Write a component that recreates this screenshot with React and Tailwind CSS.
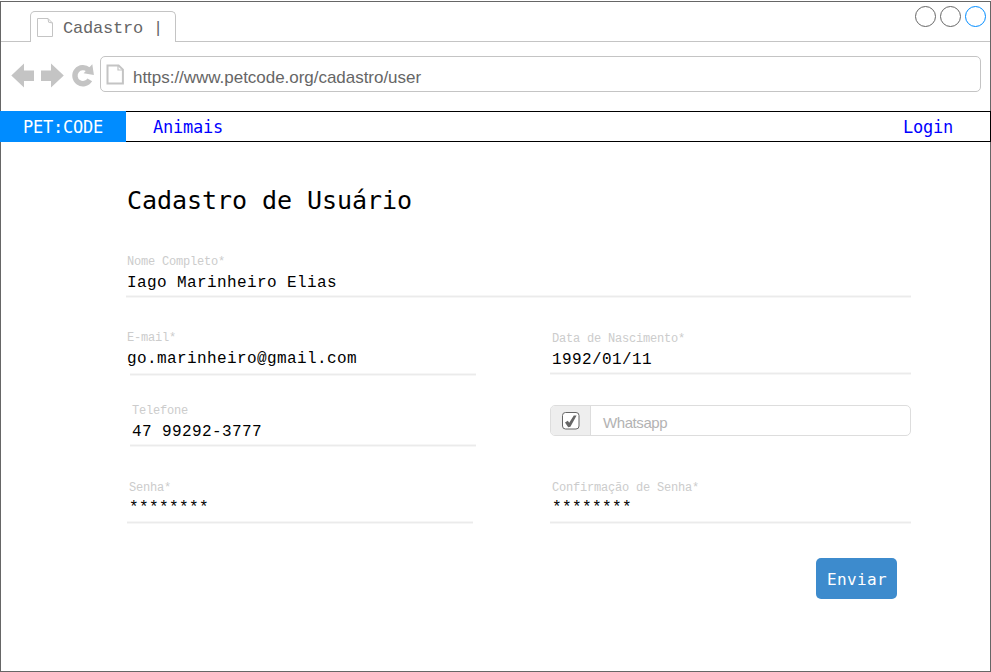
import React from "react";

function PageIcon({ size, stroke, className }) {
  return size === "sm" ? (
    <svg className={className} width="18" height="20" viewBox="0 0 18 20" fill="none" stroke="#c4c4c4" strokeWidth={stroke}>
      <path d="M1.5 1.5H12L16.5 6V19.5H1.5Z" />
      <path d="M12 1.5L12.6 5.2L16.5 6" />
    </svg>
  ) : (
    <svg className={className} width="19" height="22" viewBox="0 0 19 22" fill="none" stroke="#c4c4c4" strokeWidth={stroke}>
      <path d="M1.5 1.5H12.6L16.9 5.6V19.5H1.5Z" />
      <path d="M12 1.5V6H16.9" strokeWidth="1.2" />
    </svg>
  );
}

function NavIcons() {
  return (
    <svg className="block shrink-0" width="99" height="30" viewBox="1 60 99 30">
      <path d="M11.3 75.5L24 63.5V70.5H34V81H24V87.5Z" fill="#c4c4c4" />
      <path d="M63.8 75.5L51 63.5V70.5H41V81H51V87.5Z" fill="#c4c4c4" />
      <path d="M89.8 79.8A8 8 0 1 1 88.4 69.8" fill="none" stroke="#c4c4c4" strokeWidth="5.4" />
      <path d="M92.3 64.3L93.9 74.9L83.6 73.2Z" fill="#c4c4c4" />
    </svg>
  );
}

function Field({ label, value, box, text, valueBox, line }) {
  return (
    <div className={`flex flex-col ${box}`}>
      <div className={`mt-px h-[14px] text-[12px] leading-[14px] tracking-[-0.2px] text-[#cccccc] ${text}`}>{label}</div>
      <div className={`mt-[4px] h-[19px] text-[16px] tracking-[0.4px] text-black ${text} ${valueBox || "leading-[20px]"}`}>{value}</div>
      <div className={`h-[3px] border-y border-[#f6f6f6] bg-[#ebebeb] ${line}`} />
    </div>
  );
}

export default function App() {
  return (
    <div className="h-[672px] w-[991px] overflow-hidden bg-white pt-px font-['Liberation_Mono',monospace]">
      <div className="flex h-[671px] flex-col border border-[#666666]">
        <div className="flex h-[40px] shrink-0">
          <div className="w-[29px] border-b border-[#c4c4c4]" />
          <div className="mt-[9px] flex h-[31px] w-[146px] rounded-t-[5px] border border-b-0 border-[#c4c4c4] pl-[5px]">
            <PageIcon size="sm" stroke="1" className="mt-[5px]" />
            <span className="ml-[9px] mt-[7px] whitespace-pre text-[17px] leading-[20px] tracking-[-0.2px] text-[#666666]">Cadastro |</span>
          </div>
          <div className="flex flex-1 justify-end gap-[4px] border-b border-[#c4c4c4] pr-[4px] pt-[4px]">
            <div className="size-[21px] rounded-full border border-[#666666]" />
            <div className="size-[21px] rounded-full border border-[#666666]" />
            <div className="size-[21px] rounded-full border border-[#008cff]" />
          </div>
        </div>

        <div className="flex h-[69px] shrink-0">
          <div className="pt-[18px]">
            <NavIcons />
          </div>
          <div className="mt-[14px] flex h-[36px] w-[881px] rounded-[5px] border border-[#c4c4c4] pl-[5px]">
            <PageIcon size="lg" stroke="2" className="mt-[7px]" />
            <span className="ml-[8px] mt-[11px] text-[17px] leading-[20px] tracking-[-0.03px] text-[#666666] font-['Liberation_Sans',sans-serif]">https://www.petcode.org/cadastro/user</span>
          </div>
        </div>

        <nav className="-mx-px flex h-[31px] shrink-0 font-['DejaVu_Sans_Mono',monospace] text-[17px] leading-[33px] tracking-[-0.23px]">
          <div className="w-[126px] bg-[#008cff] pl-[23px] text-white">PET:CODE</div>
          <div className="flex flex-1 justify-between border-y border-r border-black pl-[27px] pr-[37px] leading-[31px] text-[#0000ff]">
            <a>Animais</a>
            <a>Login</a>
          </div>
        </nav>

        <main className="flex flex-col pl-[125px]">
          <h1 className="mt-[44px] h-[30px] pl-px font-['DejaVu_Sans_Mono',monospace] text-[25px] leading-[30px] tracking-[-0.05px] text-black">Cadastro de Usuário</h1>
          <Field label="Nome Completo*" value="Iago Marinheiro Elias" box="mt-[38px] h-[76px] w-[785px]" text="pl-px" line="mt-[3px]" />
          <div className="flex h-[75px]">
            <Field label="E-mail*" value="go.marinheiro@gmail.com" box="w-[350px]" text="pl-px" line="ml-[4px] mt-[5px]" />
            <Field label="Data de Nascimento*" value="1992/01/11" box="ml-[74px] w-[361px] pt-px" text="pl-[2px]" line="mt-[3px]" />
          </div>
          <div className="flex h-[75px]">
            <Field label="Telefone" value="47 99292-3777" box="w-[350px] -mt-[2px]" text="pl-[6px]" line="ml-[4px] mt-[3px]" />
            <div className="ml-[74px] flex h-[31px] w-[361px] overflow-hidden rounded-[5px] border border-[#dddddd]">
              <div className="flex w-[40px] items-center justify-center border-r border-[#dddddd] bg-[#eeeeee]">
                <svg width="18" height="18" viewBox="0 0 18 18">
                  <rect x="0.5" y="0.5" width="16.5" height="16.5" rx="3" fill="#fff" stroke="#666" />
                  <path d="M3 10.4L5.8 8.8L7.2 10.8L11.8 3.6L14.6 3.4L8.4 14.8L6.2 15.2Z" fill="#666" />
                </svg>
              </div>
              <span className="ml-[12px] mt-[8px] text-[15px] leading-[18px] tracking-[-0.42px] text-[#b3b3b3] font-['Liberation_Sans',sans-serif]">Whatsapp</span>
            </div>
          </div>
          <div className="flex h-[78px]">
            <Field label="Senha*" value="********" box="w-[348px] pr-px" text="pl-[3px]" valueBox="leading-[18px]" line="ml-px mt-[3px]" />
            <Field label="Confirmação de Senha*" value="********" box="ml-[76px] w-[361px]" text="pl-[2px]" valueBox="leading-[18px]" line="mt-[3px]" />
          </div>
          <button className="ml-[690px] h-[41px] w-[81px] rounded-[5px] bg-[#3d8bcd] pl-px pt-[2px] font-['DejaVu_Sans_Mono',monospace] text-[16px] tracking-[0.37px] text-white">Enviar</button>
        </main>
      </div>
    </div>
  );
}
